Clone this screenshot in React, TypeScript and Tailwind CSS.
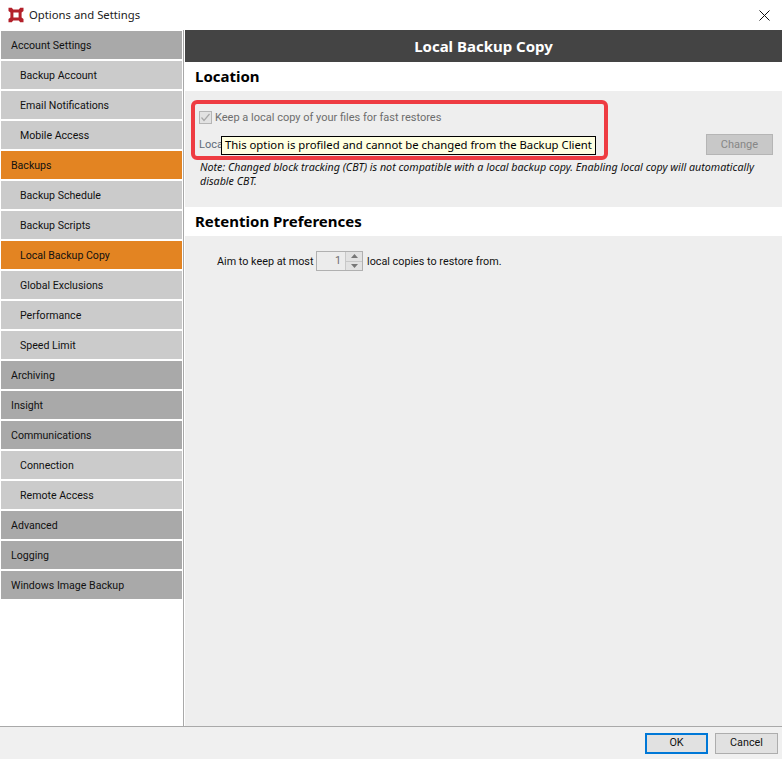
const FONT = "font-['Roboto','Noto_Sans',sans-serif]";
const NOTO = "font-['Noto_Sans','Open_Sans',sans-serif]";

type Kind = "top" | "sub";
const items: { label: string; kind: Kind; active?: boolean }[] = [
  { label: "Account Settings", kind: "top" },
  { label: "Backup Account", kind: "sub" },
  { label: "Email Notifications", kind: "sub" },
  { label: "Mobile Access", kind: "sub" },
  { label: "Backups", kind: "top", active: true },
  { label: "Backup Schedule", kind: "sub" },
  { label: "Backup Scripts", kind: "sub" },
  { label: "Local Backup Copy", kind: "sub", active: true },
  { label: "Global Exclusions", kind: "sub" },
  { label: "Performance", kind: "sub" },
  { label: "Speed Limit", kind: "sub" },
  { label: "Archiving", kind: "top" },
  { label: "Insight", kind: "top" },
  { label: "Communications", kind: "top" },
  { label: "Connection", kind: "sub" },
  { label: "Remote Access", kind: "sub" },
  { label: "Advanced", kind: "top" },
  { label: "Logging", kind: "top" },
  { label: "Windows Image Backup", kind: "top" },
];

function Logo() {
  return (
    <svg width="16" height="16" viewBox="0 0 16 16" className="shrink-0">
      <path
        fillRule="evenodd"
        d="M0.5 0.8 L3.8 0.8 L5.2 2.6 L10.8 2.6 L12.2 0.8 L15.5 0.8 L15.5 4 L13.6 5.4 L13.6 10.6 L15.5 12 L15.5 15.2 L12.2 15.2 L10.8 13.4 L5.2 13.4 L3.8 15.2 L0.5 15.2 L0.5 12 L2.4 10.6 L2.4 5.4 L0.5 4 Z M5.4 5.4 L5.4 10.6 L10.6 10.6 L10.6 5.4 Z"
        fill="#b3202a"
      />
    </svg>
  );
}

function SectionHeader({ children }: { children: string }) {
  return (
    <div className={`${NOTO} h-[29px] bg-white pl-[10px] flex items-center text-[15px] font-bold text-black`}>
      {children}
    </div>
  );
}

export default function App() {
  return (
    <div className={`${FONT} w-[782px] h-[759px] bg-white flex flex-col text-[11px] text-[#111] overflow-hidden relative`}>
      {/* title bar */}
      <div className="h-[30px] shrink-0 flex items-center pl-[8px] pr-[12px] gap-[5px]">
        <Logo />
        <span className={`${NOTO} text-[11.3px] text-[#222] flex-1 pt-[1px]`}>Options and Settings</span>
        <svg width="11" height="11" viewBox="0 0 11 11" stroke="#111" strokeWidth="1" fill="none">
          <path d="M0.5 0.5 L10.5 10.5 M10.5 0.5 L0.5 10.5" />
        </svg>
      </div>

      {/* body */}
      <div className="flex-1 flex min-h-0">
        <nav className="w-[184px] shrink-0 border-r border-[#a9a9a9] pt-px pl-px pr-px flex flex-col gap-[2px] text-[10.6px]">
          {items.map((it) => (
            <div
              key={it.label}
              className={`h-[28px] flex items-center pt-[2px] ${it.kind === "sub" ? "pl-[19px]" : "pl-[10px]"} ${
                it.active ? "bg-[#e38422]" : it.kind === "top" ? "bg-[#a9a9a9]" : "bg-[#cbcbcb]"
              }`}
            >
              {it.label}
            </div>
          ))}
        </nav>

        <main className="flex-1 ml-px flex flex-col min-w-0">
          <div className={`${NOTO} h-[32px] bg-[#444444] text-white font-bold text-[15px] flex items-center justify-center`}>
            Local Backup Copy
          </div>
          <SectionHeader>Location</SectionHeader>
          <section className="h-[116px] bg-[#eeeeee] pl-[14px] pr-[9px] pt-[18px] flex flex-col">
            <div className="flex items-center gap-[3px] h-[16px] text-[#6d6d6d]">
              <span className="w-[13px] h-[13px] bg-[#e2e2e2] border border-[#b5b5b5] flex items-center justify-center">
                <svg width="11" height="11" viewBox="0 0 11 11" fill="none" stroke="#a8a8a8" strokeWidth="1.2">
                  <path d="M1.5 5.5 L4 8.5 L9.5 2" />
                </svg>
              </span>
              <span className="pt-[2px]">Keep a local copy of your files for fast restores</span>
            </div>
            <div className="flex items-center justify-between h-[21px] mt-[9px] text-[#5f6b7a]">
              <span className="pt-[1px]">Local</span>
              <div className="w-[67px] h-[21px] pt-[1px] bg-[#c8c8c8] border border-[#b5b5b5] text-[#868686] flex items-center justify-center">
                Change
              </div>
            </div>
            <p className={`${NOTO} italic text-[10.7px] leading-[14px] text-[#111] mt-[5px] ml-px pr-[7px]`}>
              Note: Changed block tracking (CBT) is not compatible with a local backup copy. Enabling local copy will automatically disable CBT.
            </p>
          </section>
          <SectionHeader>Retention Preferences</SectionHeader>
          <section className="flex-1 bg-[#eeeeee] pl-[32px] pt-[15px]">
            <div className="flex items-center h-[20px] text-[10.8px]">
              <span className="w-[99px] whitespace-nowrap pt-[2px]">Aim to keep at most</span>
              <div className="w-[47px] h-[20px] border border-[#b0b0b0] bg-[#ececec] flex">
                <span className="flex-1 text-right pr-[4px] text-[#6d6d6d] leading-[18px]">1</span>
                <div className="w-[17px] border-l border-[#c8c8c8] flex flex-col">
                  <div className="flex-1 bg-[#e2e2e2] flex items-center justify-center border-b border-[#c8c8c8]">
                    <svg width="7" height="4" viewBox="0 0 7 4"><path d="M3.5 0 L7 4 L0 4 Z" fill="#777" /></svg>
                  </div>
                  <div className="flex-1 bg-[#e2e2e2] flex items-center justify-center">
                    <svg width="7" height="4" viewBox="0 0 7 4"><path d="M0 0 L7 0 L3.5 4 Z" fill="#777" /></svg>
                  </div>
                </div>
              </div>
              <span className="ml-[4px] pt-[2px]">local copies to restore from.</span>
            </div>
          </section>
        </main>
      </div>

      {/* footer */}
      <div className="h-[33px] shrink-0 bg-[#f0f0f0] border-t border-[#a9a9a9] flex items-start justify-end pt-[6px] pr-[4px] gap-[7px] text-[10.8px]">
        <div className="w-[63px] h-[21px] bg-[#e1e1e1] border-2 border-[#0078d7] flex items-center justify-center">OK</div>
        <div className="w-[63px] h-[21px] bg-[#e1e1e1] border border-[#adadad] flex items-center justify-center">Cancel</div>
      </div>

      {/* annotation */}
      <div className="absolute left-[191px] top-[100px] w-[417px] h-[60px] border-[4px] border-[#ee3c42] rounded-[6px] pointer-events-none" />
      {/* tooltip */}
      <div className={`${NOTO} text-[11.3px] absolute left-[221px] top-[136px] h-[19px] bg-[#ffffe1] border border-black text-black flex items-center px-[3px] whitespace-nowrap`}>
        This option is profiled and cannot be changed from the Backup Client
      </div>
    </div>
  );
}
